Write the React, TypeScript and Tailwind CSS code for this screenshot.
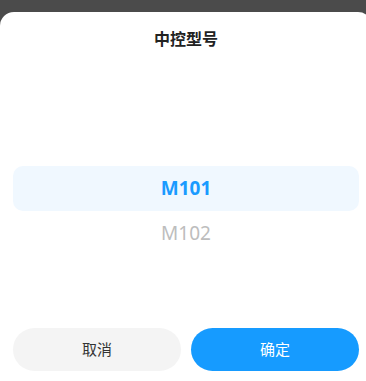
import { useState } from 'react';

const options = ['M101', 'M102'];

export default function App() {
  const [selected] = useState(0);

  return (
    <div
      className="h-screen w-screen overflow-hidden bg-[#4b4b4b] pt-[12px] flex flex-col"
      style={{ fontFamily: '"Noto Sans", "Noto Sans CJK SC", sans-serif' }}
    >
      <div className="flex-1 w-[372px] shrink-0 bg-white rounded-t-[14px] flex flex-col">
        {/* Header */}
        <div className="h-[54px] flex items-center justify-center">
          <h3 className="text-[16px] font-semibold text-[#222]">中控型号</h3>
        </div>

        {/* Picker */}
        <div className="h-[262px] px-[13px] pt-[100px]">
          {options.map((opt, i) => (
            <div
              key={opt}
              className={`h-[45px] flex items-center justify-center rounded-[10px] text-[19px] ${
                i === selected ? 'bg-[#f0f8ff] text-[#1a9bff] font-bold' : 'text-[#bdbdbd]'
              }`}
            >
              {opt}
            </div>
          ))}
        </div>

        {/* Buttons */}
        <div className="flex gap-[10px] px-[13px]">
          <button className="flex-1 h-[43px] rounded-full bg-[#f4f4f4] text-[#333] text-[15px]">取消</button>
          <button className="flex-1 h-[43px] rounded-full bg-[#169bff] text-white text-[15px]">确定</button>
        </div>
      </div>
    </div>
  );
}
